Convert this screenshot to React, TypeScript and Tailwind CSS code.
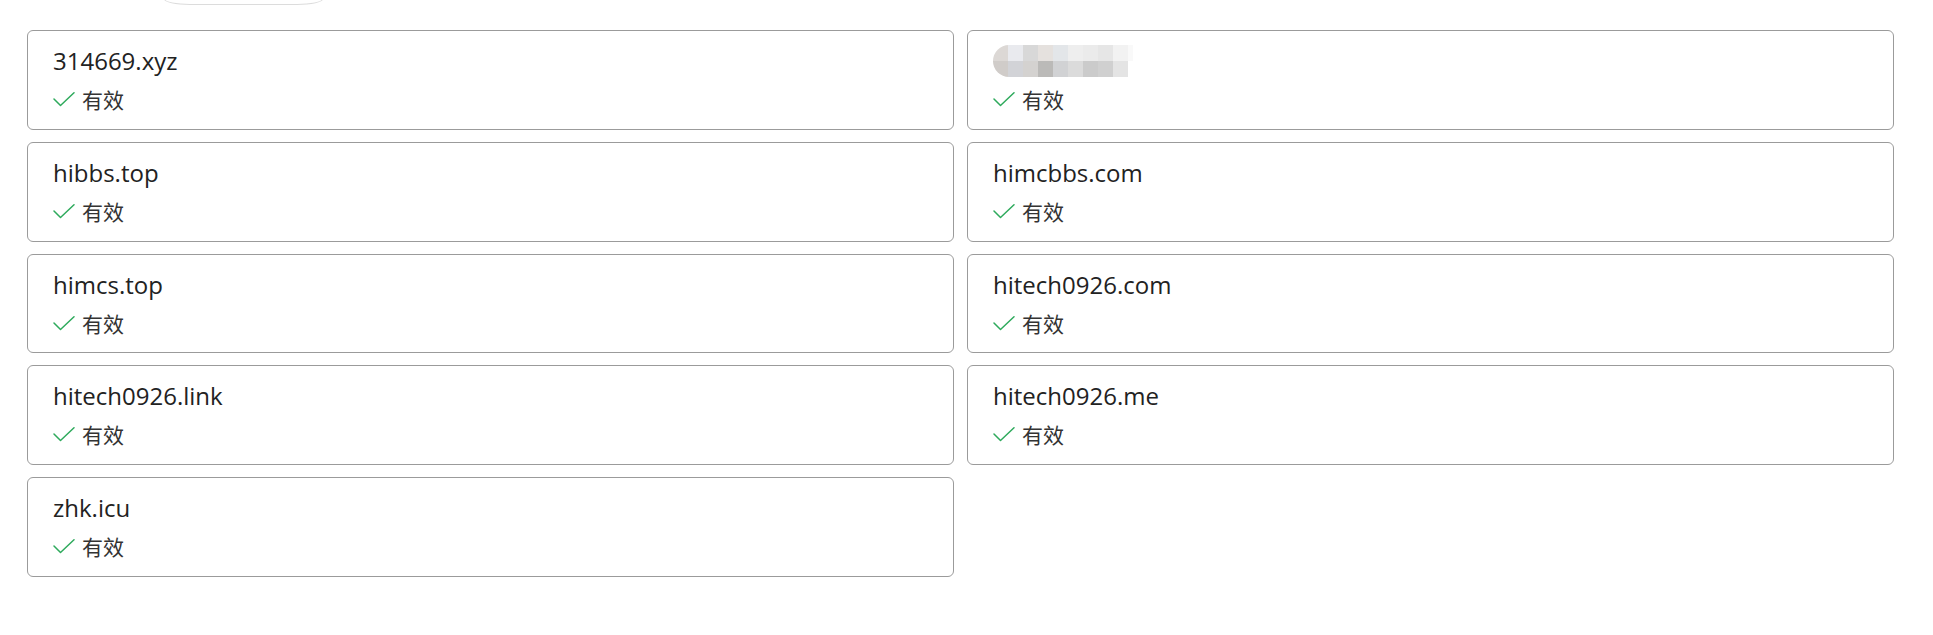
import React from 'react';

type Domain = { name: string | null; valid: boolean };

const domains: Domain[] = [
  { name: '314669.xyz', valid: true },
  { name: null, valid: true },
  { name: 'hibbs.top', valid: true },
  { name: 'himcbbs.com', valid: true },
  { name: 'himcs.top', valid: true },
  { name: 'hitech0926.com', valid: true },
  { name: 'hitech0926.link', valid: true },
  { name: 'hitech0926.me', valid: true },
  { name: 'zhk.icu', valid: true },
];

// pixelated blur over a hidden domain
const blurTop = ['#dcd8d5', '#e9eaee', '#d8d8d8', '#e5e1de', '#e3e6e9', '#eeeeee', '#ebebeb', '#e6e6e6', '#f2f2f2'];
const blurBottom = ['#d0ccc9', '#d2d3d7', '#d4d2d0', '#bbbab8', '#d1d2d4', '#dbdbdb', '#cbcbcb', '#d0d0d0', '#e4e4e4'];

function CheckMark() {
  return (
    <svg width="22" height="16" viewBox="0 0 22 16" fill="none" className="shrink-0">
      <polyline
        points="1,7 7.5,13.5 21,0.8"
        stroke="#2eaa5c"
        strokeWidth="1.5"
        strokeLinecap="round"
        strokeLinejoin="round"
      />
    </svg>
  );
}

function Blurred() {
  return (
    <div className="flex flex-col h-[32px] w-[140px] rounded-l-[16px] overflow-hidden">
      <div className="flex h-[16px]">
        {blurTop.map((c, i) => (
          <div key={i} className="w-[15px] h-full" style={{ backgroundColor: c }} />
        ))}
        <div className="w-[5px] h-full bg-[#f9f9f9]" />
      </div>
      <div className="flex h-[16px]">
        {blurBottom.map((c, i) => (
          <div key={i} className="w-[15px] h-full" style={{ backgroundColor: c }} />
        ))}
      </div>
    </div>
  );
}

function DomainCard({ domain }: { domain: Domain }) {
  return (
    <div className="h-[99.75px] border border-[#9b9b9b] rounded-[6px] bg-white pl-[25px] pt-[14px]">
      <div className="h-[32px] flex items-center text-[24px] leading-[32px] text-[#222]">
        {domain.name ? domain.name : <Blurred />}
      </div>
      <div className="mt-[8px] h-[30px] flex items-center gap-[7px] text-[21px] leading-[30px] text-[#333]">
        <CheckMark />
        <span>{domain.valid ? '有效' : '无效'}</span>
      </div>
    </div>
  );
}

export default function App() {
  return (
    <div
      className="w-[1933px] h-[635px] bg-white overflow-hidden"
      style={{ fontFamily: '"Open Sans", "Noto Sans CJK SC", sans-serif' }}
    >
      <div className="pl-[164px]">
        <div className="w-[159px] h-[40px] -mt-[35px] border border-[#dcdcdc] rounded-[26px/6px] bg-white" />
      </div>
      <div className="pl-[27px] pr-[39px] pt-[25px] grid grid-cols-2 gap-x-[13px] gap-y-[12px]">
        {domains.map((d, i) => (
          <DomainCard key={i} domain={d} />
        ))}
      </div>
    </div>
  );
}
